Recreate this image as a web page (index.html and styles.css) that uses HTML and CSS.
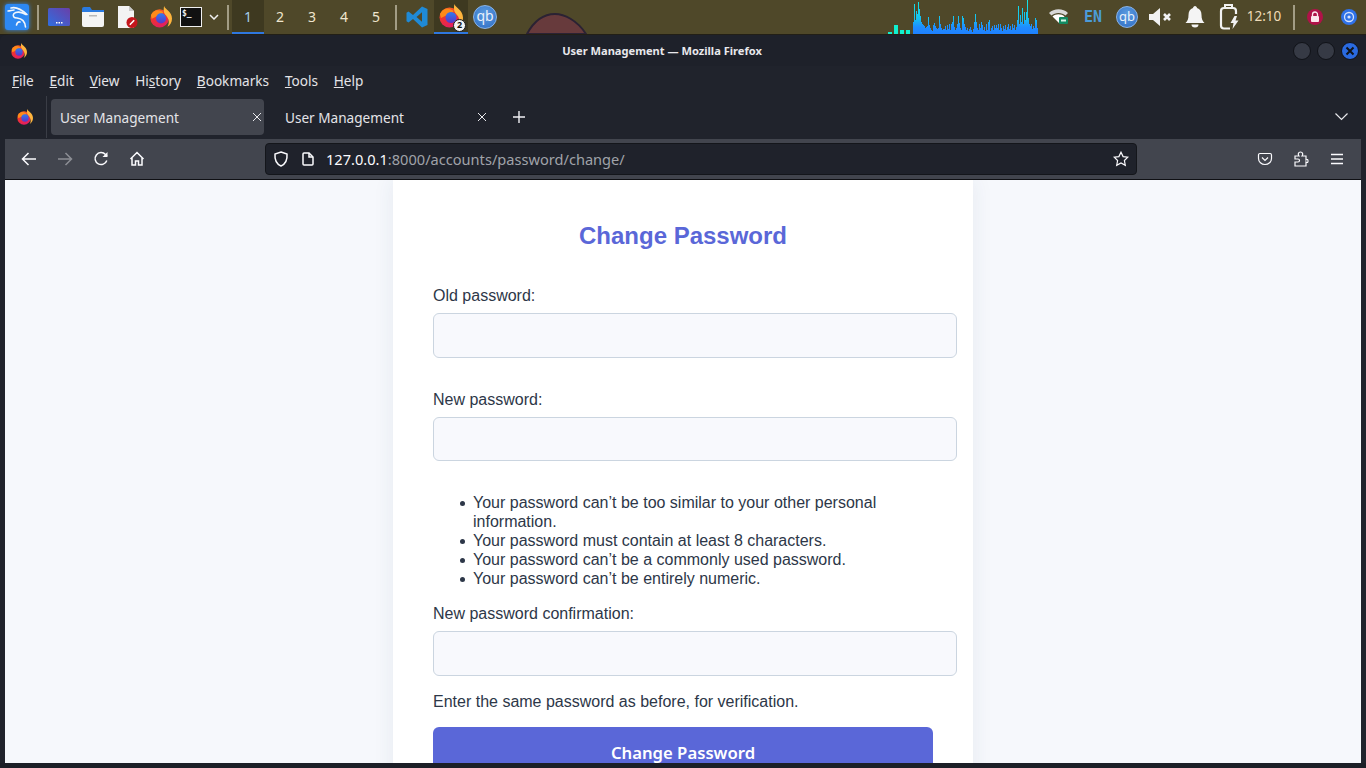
FILE: index.html
```html
<!DOCTYPE html>
<html lang="en">
<head>
  <meta charset="UTF-8" />
  <meta name="viewport" content="width=device-width, initial-scale=1.0" />
  <title>User Management</title>
  <link rel="stylesheet" href="styles.css">
</head>
<body>

  <svg class="defs" width="0" height="0">
    <defs>
      <linearGradient id="ff-base" x1="0" y1="0" x2="0.4" y2="1">
        <stop offset="0" stop-color="#ff7a1f" />
        <stop offset="0.5" stop-color="#f0342f" />
        <stop offset="1" stop-color="#e31f5f" />
      </linearGradient>
      <linearGradient id="ff-globe" x1="0" y1="0" x2="0" y2="1">
        <stop offset="0" stop-color="#2f7bf0" />
        <stop offset="1" stop-color="#5a35c8" />
      </linearGradient>
      <linearGradient id="launcher" x1="0" y1="1" x2="1" y2="0">
        <stop offset="0" stop-color="#2f6fe0" />
        <stop offset="1" stop-color="#6a3fa8" />
      </linearGradient>
      <linearGradient id="viz" gradientUnits="userSpaceOnUse" x1="0" y1="0" x2="0" y2="34">
        <stop offset="0" stop-color="#12e8e4" />
        <stop offset="0.55" stop-color="#16c0f0" />
        <stop offset="0.8" stop-color="#1e8cff" />
        <stop offset="1" stop-color="#1f80ff" />
      </linearGradient>
      <symbol id="firefox" viewBox="0 0 24 24">
        <circle cx="10.500" cy="13.500" r="10" fill="url(#ff-base)" />
        <path d="M15.500 0c0.500 3.500 8.500 6 8.500 13.500 0 4-2 7.500-5 9 1.500-2 2-5 1-8-1-3.500-3.500-4.500-4.500-7-0.700-2-0.700-5.500 0-7.500z" fill="#ffb53d" />
        <path d="M1 10c2-5 7-6.500 11-4.500 3 1 3 2.500 1.500 2.500-3 0-5 1-5.500 3l-6 3z" fill="#ff8a1a" />
        <circle cx="12" cy="13.500" r="5.500" fill="url(#ff-globe)" />
      </symbol>
    </defs>
  </svg>

  <div class="panel">
    <svg class="wallpaper" width="70" height="21" viewBox="0 0 70 21">
      <path d="M5 21C13 6 24 1 33 1s22 6 31 20z" fill="#673a3c" stroke="#2b2233" stroke-width="2" />
    </svg>

    <div class="panel-left">
      <div class="cell">
        <svg class="kali" width="24" height="26" viewBox="0 0 24 26">
          <rect width="24" height="26" rx="3" fill="#2d88f2" />
          <g fill="none" stroke="#f2f6fb" stroke-width="1.600" stroke-linecap="round">
            <path d="M6 4c5-1.500 10 1 16 6.500" />
            <path d="M21 10.500c-5-3-10-3-12-1-2 2.500 0 4.500 3 4.500 5 0.500 8 3 8.500 9" />
            <path d="M3 7c2 0 4-1 6-1" />
            <path d="M15 18c-2-0.500-3 1-3.500 3" />
          </g>
        </svg>
      </div>
      <div class="sep"></div>
      <div class="cell">
        <svg width="22" height="18" viewBox="0 0 22 18">
          <rect width="22" height="18" rx="1.500" fill="url(#launcher)" />
          <path d="M8 14h1.500v1.500H8zM10.500 14H12v1.500h-1.500zM13 14h1.500v1.500H13z" fill="#fff" />
        </svg>
      </div>
      <div class="cell">
        <svg width="22" height="20" viewBox="0 0 22 20">
          <path d="M0 2a2 2 0 0 1 2-2h6l2 3h12v6H0z" fill="#2a7ae0" />
          <path d="M0 5h22v13a2 2 0 0 1-2 2H2a2 2 0 0 1-2-2z" fill="#f4f4f4" />
          <rect x="7" y="8" width="8" height="1.500" fill="#b8b8b8" />
        </svg>
      </div>
      <div class="cell">
        <svg width="22" height="24" viewBox="0 0 22 24">
          <path d="M2 1h11l5 5v17H2z" fill="#f3f3f3" />
          <path d="M13 1l5 5h-5z" fill="#c9c9c9" />
          <circle cx="16" cy="17.500" r="5.500" fill="#c4161c" />
          <path d="M13.800 19.700l4.400-4.400" stroke="#fff" stroke-width="1.600" />
        </svg>
      </div>
      <div class="cell"><svg width="22" height="22"><use href="#firefox" /></svg></div>
      <div class="cell cell-term">
        <div class="terminal">$_</div>
      </div>
      <div class="cell cell-chev">
        <svg width="10" height="6" viewBox="0 0 10 6"><path d="M1 1l4 4 4-4" fill="none" stroke="#f0f0f0" stroke-width="1.500" /></svg>
      </div>
      <div class="sep"></div>
      <div class="workspace active">1</div>
      <div class="workspace">2</div>
      <div class="workspace">3</div>
      <div class="workspace">4</div>
      <div class="workspace">5</div>
      <div class="sep"></div>
      <div class="cell">
        <svg width="22" height="22" viewBox="0 0 22 22">
          <path d="M16 0.500l5.500 2.500v16l-5.500 2.500-9-8.500-4.500 3.500-2-1.200v-8.600l2-1.200 4.500 3.500zM16 6.300l-5.500 4.700 5.500 4.700z" fill="#1f8ad6" fill-rule="evenodd" />
        </svg>
      </div>
      <div class="cell running">
        <svg width="24" height="24"><use href="#firefox" /></svg>
        <span class="badge">2</span>
      </div>
      <div class="cell"><div class="qb">qb</div></div>
    </div>

    <div class="panel-right">
      <svg class="viz" width="152" height="34" viewBox="0 0 152 34">
        <path d="M0 32h4v2H0zM6 25h4v9H6zM12 30h4v4h-4zM18 30h4v4h-4z" fill="#10f0d0" />
        <path fill="url(#viz)" d="M25 34V22h1V4h1V20h1V11h1V14h1V2h1V9h1V16h1V22h1V24h1V25h1V26h1V28h1V27h1V26h1V17h1V25h1V28h1V30h1V31h1V25h1V23h1V26h1V28h1V29h1V28h1V16h1V24h1V28h1V30h1V29h2V26h1V30h1V25h1V29h1V24h1V30h1V24h1V22h1V16h1V27h1V30h1V28h1V24h1V16h1V23h1V28h1V30h1V16h1V18h1V24h1V27h1V30h1V28h1V31h1V29h1V27h1V30h1V32h1V29h1V22h1V14h1V22h1V28h1V30h1V24h1V28h1V22h1V25h1V30h1V27h1V31h1V24h1V30h1V22h1V20h1V31h1V28h1V26h1V30h1V25h1V28h1V25h1V28h1V24h1V30h1V24h1V28h1V31h1V26h1V29h1V25h1V30h1V27h1V24h1V29h1V26h1V30h1V24h1V28h1V25h1V30h1V27h1V20h1V6h1V24h1V15h1V22h1V8h1V24h1V12h1V20h1V12h1V0h1V18h1V24h1V26h1V24h1V29h1V26h1V28h1V18h1V20h1V28h1V34z" />
      </svg>
      <div class="cell">
        <svg width="20" height="16" viewBox="0 0 20 16">
          <path d="M0 4c5-5 14-5 19 0l-2.500 2.500c-3.500-3.500-10.500-3.500-14 0z" fill="#d8d8d8" />
          <path d="M3.500 7.500c3-3 9-3 12 0L10 14z" fill="#fff" />
          <rect x="10" y="8" width="9" height="7" rx="1" fill="#128a62" />
          <rect x="12" y="10.500" width="5" height="2" fill="#d8f5e8" />
        </svg>
      </div>
      <div class="cell en">EN</div>
      <div class="cell"><div class="qb">qb</div></div>
      <div class="cell">
        <svg width="24" height="20" viewBox="0 0 24 20">
          <path d="M0 7h4l7-6v18l-7-6H0z" fill="#f2f2f2" />
          <path d="M15 7l6 6M21 7l-6 6" stroke="#f2f2f2" stroke-width="2.600" />
        </svg>
      </div>
      <div class="cell">
        <svg width="20" height="22" viewBox="0 0 20 22">
          <path d="M10 0c1 0 2 1 2 2 3 1 4.500 3.500 4.500 7 0 4 1 6 3 8H0.500c2-2 3-4 3-8 0-3.500 1.500-6 4.500-7 0-1 1-2 2-2z" fill="#f4f4f4" />
          <path d="M6.500 18.500h7a3.500 3 0 0 1-7 0z" fill="#f4f4f4" />
        </svg>
      </div>
      <div class="cell">
        <svg width="20" height="26" viewBox="0 0 20 26">
          <path d="M6 4V1h7v3" fill="none" stroke="#f2f2f2" stroke-width="2" />
          <path d="M11 24.500H5a3 3 0 0 1-3-3V7a3 3 0 0 1 3-3h9a3 3 0 0 1 3 3v3" fill="none" stroke="#f2f2f2" stroke-width="2.200" />
          <path d="M15.500 12l-4 7h3l-1 6 6-8.500h-3l1.500-4.500z" fill="#f2f2f2" />
        </svg>
      </div>
      <div class="clock">12:10</div>
      <div class="sep"></div>
      <div class="cell">
        <svg width="16" height="16" viewBox="0 0 16 16">
          <circle cx="8" cy="8" r="8" fill="#b01248" />
          <rect x="4" y="7" width="8" height="6" rx="1" fill="#fbe6ec" />
          <path d="M5.500 7V5.500a2.500 2.500 0 0 1 5 0V7" fill="none" stroke="#fbe6ec" stroke-width="1.300" />
        </svg>
      </div>
      <div class="cell">
        <svg width="16" height="16" viewBox="0 0 16 16">
          <circle cx="8" cy="8" r="8" fill="#2f72e8" />
          <circle cx="8" cy="8" r="4.500" fill="none" stroke="#d5e3fb" stroke-width="1.300" />
          <circle cx="8" cy="8" r="1.600" fill="#d5e3fb" />
        </svg>
      </div>
    </div>
  </div>

  <div class="window">
    <div class="titlebar">
      <div class="title-icon"><svg width="16" height="16"><use href="#firefox" /></svg></div>
      <div class="title-text">User Management — Mozilla Firefox</div>
      <div class="title-buttons">
        <span class="win-btn"></span>
        <span class="win-btn"></span>
        <span class="win-btn close">
          <svg width="10" height="10" viewBox="0 0 10 10"><path d="M1.500 1.500l7 7M8.500 1.500l-7 7" stroke="#101318" stroke-width="2" /></svg>
        </span>
      </div>
    </div>

    <div class="menubar">
      <span><u>F</u>ile</span>
      <span><u>E</u>dit</span>
      <span><u>V</u>iew</span>
      <span>Hi<u>s</u>tory</span>
      <span><u>B</u>ookmarks</span>
      <span><u>T</u>ools</span>
      <span><u>H</u>elp</span>
    </div>

    <div class="tabbar">
      <div class="tab-firefox"><svg width="16" height="16"><use href="#firefox" /></svg></div>
      <div class="tab selected">
        <span>User Management</span>
        <svg width="10" height="10" viewBox="0 0 10 10"><path d="M1 1l8 8M9 1l-8 8" stroke="#e8e8ec" stroke-width="1" /></svg>
      </div>
      <div class="tab">
        <span>User Management</span>
        <svg width="10" height="10" viewBox="0 0 10 10"><path d="M1 1l8 8M9 1l-8 8" stroke="#e8e8ec" stroke-width="1" /></svg>
      </div>
      <div class="new-tab">
        <svg width="12" height="12" viewBox="0 0 12 12"><path d="M6 0v12M0 6h12" stroke="#f0f0f4" stroke-width="1.400" /></svg>
      </div>
      <div class="tab-list">
        <svg width="13" height="8" viewBox="0 0 13 8"><path d="M0.500 0.500l6 6 6-6" fill="none" stroke="#e8e8ec" stroke-width="1.200" /></svg>
      </div>
    </div>

    <div class="navbar">
      <div class="nav-btn">
        <svg width="16" height="16" viewBox="0 0 16 16"><path d="M15 8H1.500M7.500 2l-6 6 6 6" class="ico" /></svg>
      </div>
      <div class="nav-btn disabled">
        <svg width="16" height="16" viewBox="0 0 16 16"><path d="M1 8h13.500M8.500 2l6 6-6 6" class="ico" /></svg>
      </div>
      <div class="nav-btn">
        <svg width="16" height="16" viewBox="0 0 16 16"><path d="M13.800 9.500A6 6 0 1 1 12.500 3.500L14 5" class="ico" /><path d="M14.500 1v5h-5z" fill="#fbfbfe" /></svg>
      </div>
      <div class="nav-btn">
        <svg width="16" height="16" viewBox="0 0 16 16"><path d="M1.500 8L8 1.500 14.500 8M3 6.500V14h3.500v-4h3v4H13V6.500" class="ico" /></svg>
      </div>

      <div class="urlbar">
        <svg class="url-shield" width="16" height="16" viewBox="0 0 16 16"><path d="M8 1l6 2c0.500 6-1.500 10-6 12C3.500 13 1.500 9 2 3z" class="ico" /></svg>
        <svg class="url-page" width="12" height="14" viewBox="0 0 12 14"><path d="M1 2a1 1 0 0 1 1-1h5l4 4v7a1 1 0 0 1-1 1H2a1 1 0 0 1-1-1z" class="ico" /><path d="M7 1v4h4" class="ico" /></svg>
        <div class="url-text"><span class="url-host">127.0.0.1</span>:8000/accounts/password/change/</div>
        <svg width="16" height="16" viewBox="0 0 16 16"><path d="M8 1.200l2.100 4.400 4.700 0.600-3.400 3.300 0.900 4.800L8 12l-4.300 2.300 0.900-4.800-3.400-3.300 4.700-0.600z" class="ico thin" /></svg>
      </div>

      <div class="nav-actions">
        <div class="nav-btn">
          <svg width="16" height="16" viewBox="0 0 16 16"><path d="M1.500 4a1.500 1.500 0 0 1 1.500-1.500h10A1.500 1.500 0 0 1 14.500 4v3.500a6.500 6 0 0 1-13 0z" class="ico thin" /><path d="M5 6.500l3 3 3-3" class="ico thin" /></svg>
        </div>
        <div class="nav-btn">
          <svg width="16" height="16" viewBox="0 0 16 16"><path d="M2 5h4c-1.500-2-0.500-4 1.500-4s3 2 1.500 4h4v4c1.500-1 2-0.500 2 1s-0.500 2-2 1v4H2v-4h3c1 0 1.500-1 1.500-1.500S6 8 5 8H2z" class="ico thin" /></svg>
        </div>
        <div class="nav-btn">
          <svg width="16" height="16" viewBox="0 0 16 16"><path d="M2 3.500h12M2 8h12M2 12.500h12" class="ico" /></svg>
        </div>
      </div>
    </div>

    <div class="content">
      <div class="card">
        <h2>Change Password</h2>
        <form>
          <div class="field">
            <label for="old">Old password:</label>
            <input type="password" id="old">
          </div>
          <div class="field">
            <label for="new1">New password:</label>
            <input type="password" id="new1">
          </div>
          <ul class="rules">
            <li>Your password can’t be too similar to your other personal information.</li>
            <li>Your password must contain at least 8 characters.</li>
            <li>Your password can’t be a commonly used password.</li>
            <li>Your password can’t be entirely numeric.</li>
          </ul>
          <div class="field last">
            <label for="new2">New password confirmation:</label>
            <input type="password" id="new2">
          </div>
          <p class="help">Enter the same password as before, for verification.</p>
          <button type="button" class="submit">Change Password</button>
        </form>
      </div>
    </div>
  </div>

</body>
</html>
```

FILE: styles.css
```css
* {
  box-sizing: border-box;
}

html,
body {
  height: 100%;
}

body {
  margin: 0;
  height: 768px;
  overflow: hidden;
  display: flex;
  flex-direction: column;
  background: #1c1f27;
  font-family: "Noto Sans", sans-serif;
}

.defs {
  position: absolute;
}

/* Desktop panel */
.panel {
  position: relative;
  flex: none;
  height: 35px;
  display: flex;
  justify-content: space-between;
  background: #4f4829;
  border-bottom: 1px solid #221f16;
  color: #efe6cf;
  font-size: 14px;
}

.wallpaper {
  position: absolute;
  left: 522px;
  top: 13px;
}

.panel-left,
.panel-right {
  display: flex;
  height: 34px;
}

.cell {
  position: relative;
  width: 34px;
  height: 34px;
  display: flex;
  align-items: center;
  justify-content: center;
}

.cell-term {
  width: 26px;
}

.cell-chev {
  width: 20px;
}

.kali {
  filter: drop-shadow(0 0 2px #2d88f2);
}

.sep {
  width: 8px;
  height: 34px;
  display: flex;
  justify-content: center;
  padding: 5px 0 4px;
}

.sep::before {
  content: "";
  width: 2px;
  background: #a39d85;
}

.terminal {
  width: 22px;
  height: 20px;
  background: #111;
  border: 1px solid #f0f0f0;
  color: #f0f0f0;
  font: bold 8px "DejaVu Sans Mono", monospace;
  line-height: 12px;
  padding-left: 1px;
}

.workspace {
  width: 32px;
  height: 34px;
  line-height: 33px;
  text-align: center;
}

.workspace.active {
  background: #3e3920;
  border-bottom: 2px solid #2f77e0;
  color: #a6cdea;
}

.running {
  background: #3e3920;
  border-bottom: 2px solid #2f77e0;
}

.badge {
  position: absolute;
  right: 2px;
  bottom: 0;
  width: 13px;
  height: 13px;
  border-radius: 50%;
  background: #f4f4f4;
  border: 1.500px solid #1c1c1c;
  color: #111;
  font-size: 9px;
  font-weight: 700;
  line-height: 10px;
  text-align: center;
}

.qb {
  width: 24px;
  height: 24px;
  border-radius: 50%;
  background: radial-gradient(circle at 50% 35%, #5b9be0, #2f6ec4);
  border: 1px solid #8ab4e6;
  color: #e8f0fa;
  font-size: 14px;
  line-height: 20px;
  text-align: center;
}

.panel-right .qb {
  width: 22px;
  height: 22px;
  font-size: 13px;
  line-height: 18px;
}

.viz {
  margin-right: 2px;
}

.en {
  color: #4b9bd8;
  font: bold 15px "DejaVu Sans Mono", monospace;
}

.clock {
  width: 36px;
  margin-right: 8px;
  font-size: 13.500px;
  line-height: 33px;
  text-align: center;
  white-space: nowrap;
  color: #f0dcb8;
}

/* Browser window */
.window {
  flex: none;
  height: 728px;
  margin: 0 0 5px;
  display: flex;
  flex-direction: column;
  background: #20232c;
  border-radius: 6px 6px 0 0;
}

.titlebar {
  flex: none;
  height: 31px;
  display: flex;
  align-items: center;
  background: #1e212a;
  border-radius: 6px 6px 0 0;
}

.title-icon {
  width: 38px;
  display: flex;
  justify-content: center;
}

.title-text {
  flex: 1;
  text-align: center;
  font-size: 11.100px;
  font-weight: 700;
  color: #e8e8ec;
}

.title-buttons {
  width: 80px;
  display: flex;
  gap: 6px;
  padding-left: 7px;
}

.win-btn {
  width: 18px;
  height: 18px;
  border-radius: 50%;
  background: #363a45;
  border: 1px solid #101218;
}

.win-btn.close {
  display: flex;
  align-items: center;
  justify-content: center;
  background: #2a6ae0;
}

.menubar {
  flex: none;
  height: 30px;
  display: flex;
  align-items: center;
  gap: 15.800px;
  padding: 0 0 2px 12px;
  font-size: 13.600px;
  color: #e4e4e8;
}

.tabbar {
  flex: none;
  height: 43px;
  padding-bottom: 1px;
  display: flex;
  align-items: center;
  font-size: 13.600px;
  color: #e4e4e8;
}

.tab-firefox {
  width: 47px;
  height: 100%;
  margin-right: 4px;
  display: flex;
  align-items: center;
  justify-content: center;
  border-right: 1px solid #3a3d46;
  padding-left: 4px;
}

.tab {
  width: 213px;
  height: 36px;
  margin-right: 12px;
  padding: 0 2px 0 9px;
  display: flex;
  align-items: center;
  justify-content: space-between;
  border-radius: 4px;
  white-space: nowrap;
}

.tab.selected {
  background: #42454e;
}

.new-tab {
  width: 16px;
  margin-left: 10px;
  display: flex;
  justify-content: center;
}

.tab-list {
  margin-left: auto;
  margin-right: 18px;
  display: flex;
}

.navbar {
  flex: none;
  height: 41px;
  margin: 0 5px;
  padding-left: 6px;
  display: flex;
  align-items: center;
  background: #42454e;
  border-bottom: 1px solid #0f1014;
}

.nav-btn {
  width: 36px;
  display: flex;
  justify-content: center;
}

.nav-btn.disabled {
  opacity: 0.4;
}

.ico {
  fill: none;
  stroke: #fbfbfe;
  stroke-width: 1.500;
}

.ico.thin {
  stroke-width: 1.200;
}

.urlbar {
  width: 872px;
  height: 32px;
  margin-left: 110px;
  padding: 0 7px;
  display: flex;
  align-items: center;
  background: #1f222b;
  border: 1px solid #14161b;
  border-radius: 4px;
}

.url-shield {
  margin-right: 13px;
}

.url-page {
  margin-right: 12px;
}

.url-text {
  flex: 1;
  font-size: 14.600px;
  color: #a0a2a9;
  white-space: nowrap;
}

.url-host {
  color: #fbfbfe;
}

.nav-actions {
  display: flex;
  margin-left: 110px;
}

/* Page */
.content {
  flex: 1;
  min-height: 0;
  margin: 0 5px;
  overflow: hidden;
  background: #f6f8fc;
}

.card {
  width: 580px;
  margin: 0 auto;
  padding: 42px 40px 40px;
  background: #fff;
  box-shadow: 0 0 20px rgba(40, 60, 100, 0.08);
  font-family: "Liberation Sans", Arial, sans-serif;
  font-size: 16px;
  line-height: 19px;
  color: #2d3748;
}

h2 {
  margin: 0 0 36px;
  font-size: 24px;
  line-height: 28px;
  text-align: center;
  color: #5a67d8;
}

.field {
  margin-bottom: 32px;
}

.field.last {
  margin-bottom: 16px;
}

label {
  display: block;
  margin-bottom: 8px;
}

input {
  box-sizing: content-box;
  display: block;
  width: 100%;
  height: 20.600px;
  padding: 11px;
  background: #f8f9fd;
  border: 1px solid #cbd5e0;
  border-radius: 6px;
}

.rules {
  margin: 0 0 16px;
  padding-left: 40px;
  list-style: none;
}

.rules li {
  position: relative;
}

.rules li::before {
  content: "";
  position: absolute;
  left: -13px;
  top: 8px;
  width: 5px;
  height: 5px;
  border-radius: 50%;
  background: #2d3748;
}

.help {
  margin: 0 0 16.500px;
}

.submit {
  display: block;
  width: 100%;
  height: 50px;
  background: #5a67d8;
  border: none;
  border-radius: 6px;
  color: #fff;
  font-family: "Noto Sans", sans-serif;
  font-size: 16.700px;
  font-weight: 600;
  cursor: pointer;
}
```
